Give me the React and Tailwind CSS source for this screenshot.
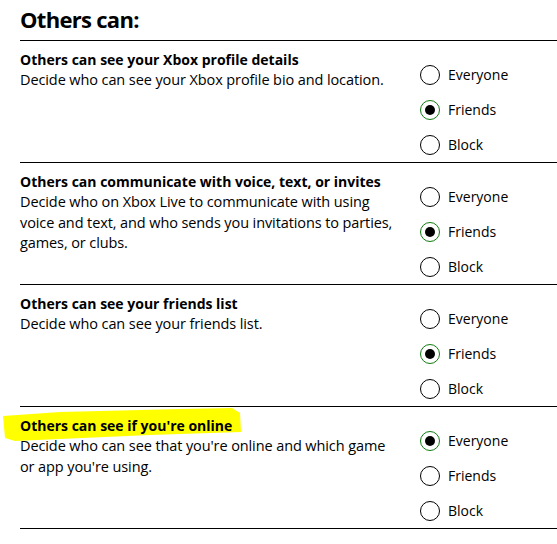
import React from "react";

const sections = [
  {
    title: "Others can see your Xbox profile details",
    desc: "Decide who can see your Xbox profile bio and location.",
    value: "Friends",
  },
  {
    title: "Others can communicate with voice, text, or invites",
    desc: "Decide who on Xbox Live to communicate with using voice and text, and who sends you invitations to parties, games, or clubs.",
    value: "Friends",
  },
  {
    title: "Others can see your friends list",
    desc: "Decide who can see your friends list.",
    value: "Friends",
  },
  {
    title: "Others can see if you're online",
    desc: "Decide who can see that you're online and which game or app you're using.",
    value: "Everyone",
    highlight: true,
  },
];

function Radio({ label, checked }) {
  return (
    <div className="flex items-center h-5">
      <span
        className={
          "w-5 h-5 rounded-full border-[1.5px] flex items-center justify-center " +
          (checked ? "border-[#107c10]" : "border-black")
        }
      >
        {checked && <span className="w-[10px] h-[10px] rounded-full bg-black" />}
      </span>
      <span className="ml-2 text-[14px] leading-5">{label}</span>
    </div>
  );
}

function Section({ s }) {
  return (
    <div className="border-t border-black h-[122px] flex">
      <div className="w-[400px] pt-[9px] pr-[23px]">
        <div className="relative">
          {s.highlight && (
            <svg
              className="absolute left-[-20px] top-[-10px] w-[250px] h-[40px]"
              viewBox="0 0 250 40"
            >
              <polygon
                points="3,10 60,6 180,3 232,2 240,7 241,26 150,29 60,33 15,35 5,32"
                fill="#ffff00"
              />
            </svg>
          )}
          <div className="relative font-bold text-[14px] leading-5 whitespace-nowrap">{s.title}</div>
        </div>
        <div className="text-[14.5px] tracking-[-0.1px] leading-[20.5px]">{s.desc}</div>
      </div>
      <div className="pt-[24px] flex flex-col gap-[15px]">
        {["Everyone", "Friends", "Block"].map((o) => (
          <Radio key={o} label={o} checked={s.value === o} />
        ))}
      </div>
    </div>
  );
}

export default function App() {
  return (
    <div className="w-[557px] h-[544px] overflow-hidden bg-white text-black font-['Segoe_UI','Open_Sans',sans-serif]">
      <div className="pl-5">
        <div className="h-10 pt-[3px] text-[22px] tracking-[-0.7px] font-bold leading-8">Others can:</div>
        {sections.map((s, i) => (
          <Section key={i} s={s} />
        ))}
        <div className="border-t border-black pt-[11px]">
          <div className="font-bold text-[14px] leading-5">
            Others can see what you're watching or listening to
          </div>
        </div>
      </div>
    </div>
  );
}
